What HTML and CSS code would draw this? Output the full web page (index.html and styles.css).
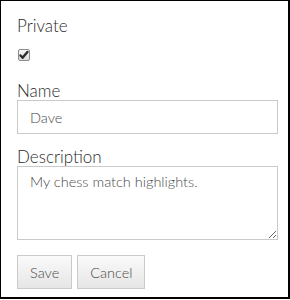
FILE: index.html
```html
<!DOCTYPE html>
<html lang="en">
<head>
  <meta charset="UTF-8">
  <meta name="viewport" content="width=device-width, initial-scale=1.0">
  <title>Edit Item</title>
  <link rel="stylesheet" href="styles.css">
</head>
<body>

  <form class="panel" onsubmit="return false">
    <label class="field-label" for="private">Private</label>
    <span class="check">
      <input type="checkbox" id="private" checked>
      <svg class="check-mark" width="12" height="12" viewBox="0 0 12 12">
        <path d="M2.5 6.5 L4.6 8.8 L9.4 3" fill="none" stroke="#2b2b2b" stroke-width="2.4" stroke-linecap="round" stroke-linejoin="round"/>
      </svg>
    </span>

    <label class="field-label name-label" for="name">Name</label>
    <input type="text" id="name" class="text-input" value="Dave">

    <label class="field-label desc-label" for="description">Description</label>
    <textarea id="description" class="text-area">My chess match highlights.</textarea>

    <div class="actions">
      <button type="submit" class="btn">Save</button>
      <button type="button" class="btn">Cancel</button>
    </div>
  </form>

</body>
</html>
```

FILE: styles.css
```css
* {
  margin: 0;
  padding: 0;
  box-sizing: border-box;
}

body {
  font-family: Lato, "Open Sans", Arial, sans-serif;
  font-weight: 300;
  background-color: #fff;
  color: #323232;
}

.panel {
  display: flex;
  flex-direction: column;
  align-items: flex-start;
  width: 290px;
  height: 299px;
  padding: 15px 12px 0 16px;
  border-left: 1px solid #000;
  border-top: 1px solid #000;
  border-right: 2px solid #000;
  border-bottom: 2px solid #000;
}

.field-label {
  font-size: 17px;
  line-height: 19px;
  color: #2b2b2b;
}

.check {
  position: relative;
  display: block;
  width: 12px;
  height: 12px;
  margin: 14px 0 0 1px;
}

.check input {
  appearance: none;
  -webkit-appearance: none;
  display: block;
  width: 12px;
  height: 12px;
  border: 1px solid #8c8c8c;
  border-radius: 2px;
  background: linear-gradient(#f4f4f4, #dcdcdc);
}

.check-mark {
  position: absolute;
  top: 0;
  left: 0;
  pointer-events: none;
}

.name-label {
  margin-top: 20px;
}

.text-input,
.text-area {
  width: 261px;
  border: 1px solid #cacaca;
  font-family: inherit;
  font-weight: 300;
  font-size: 14.5px;
  color: #4a4a4a;
  background: #fff;
  outline: none;
}

.text-input {
  height: 34px;
  padding: 0 12px;
}

.desc-label {
  margin-top: 13px;
}

.text-area {
  height: 74px;
  padding: 6px 12px;
  line-height: 17px;
  resize: both;
}

.actions {
  display: flex;
  gap: 5px;
  margin-top: 15px;
}

.btn {
  height: 34px;
  padding: 0 12px;
  font-family: inherit;
  font-weight: 300;
  font-size: 14.5px;
  color: #4a4a4a;
  border: 1px solid #cacaca;
  background: linear-gradient(#fafafa, #e6e6e6);
  cursor: pointer;
}
```
